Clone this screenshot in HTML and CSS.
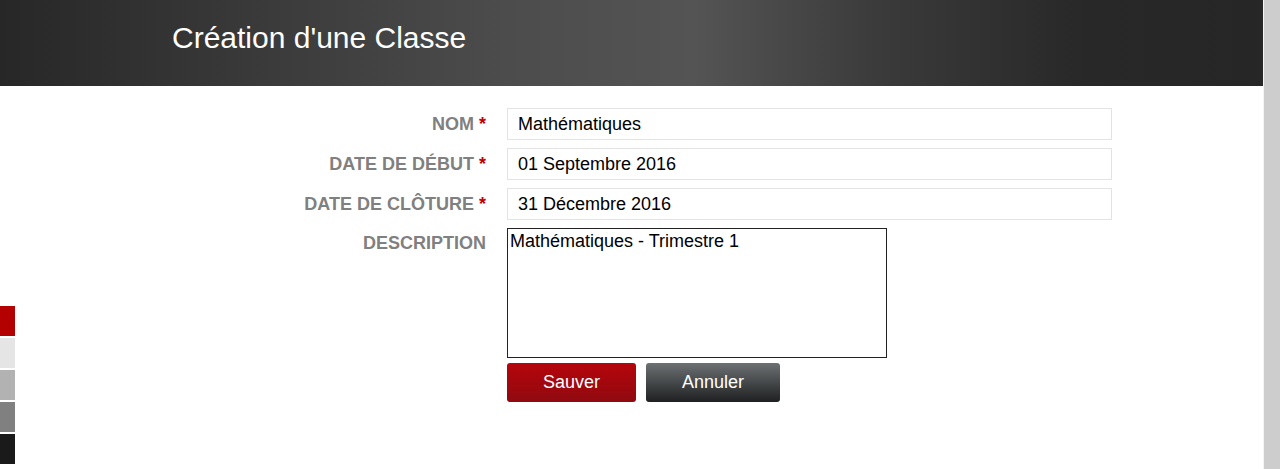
FILE: index.html
```html
<!DOCTYPE html>
<html lang="fr">
<head>
  <meta charset="utf-8">
  <title>Création d'une Classe</title>
  <link rel="stylesheet" href="styles.css">
</head>
<body>
  <div class="page">
    <div class="header">
      <h1>Création d'une Classe</h1>
    </div>

    <form class="class-form">
      <label class="field-label">NOM <span class="req">*</span></label>
      <input class="text-input" type="text" value="Mathématiques">

      <label class="field-label">DATE DE DÉBUT <span class="req">*</span></label>
      <input class="text-input" type="text" value="01 Septembre 2016">

      <label class="field-label">DATE DE CLÔTURE <span class="req">*</span></label>
      <input class="text-input" type="text" value="31 Décembre 2016">

      <label class="field-label desc-label">DESCRIPTION</label>
      <div class="desc-col">
        <textarea class="desc-input">Mathématiques - Trimestre 1</textarea>
        <div class="actions">
          <button type="button" class="btn btn-save">Sauver</button>
          <button type="button" class="btn btn-cancel">Annuler</button>
        </div>
      </div>
    </form>
  </div>

  <div class="scroll-strip"></div>

  <!-- colour switcher -->
  <div class="swatches">
    <div class="swatch red"></div>
    <div class="swatch light"></div>
    <div class="swatch mid"></div>
    <div class="swatch grey"></div>
    <div class="swatch dark"></div>
  </div>
</body>
</html>
```

FILE: styles.css
```css
body {
  margin: 0;
  font-family: "Liberation Sans", Arial, sans-serif;
  background: white;
  display: flex;
  height: 469px;
  overflow: hidden;
}

.page {
  flex: 1;
}

.header {
  height: 86px;
  background: linear-gradient(to right, #272727 0%, #4c4c4c 40%, #545454 55%, #3a3a3a 70%, #282828 86%, #262626 100%);
}

.header h1 {
  margin: 0;
  padding: 21px 0 0 172px;
  font-size: 30px;
  line-height: 34px;
  font-weight: normal;
  color: white;
}

.class-form {
  display: grid;
  grid-template-columns: 300px 605px;
  column-gap: 21px;
  row-gap: 8px;
  margin: 22px 0 0 186px;
}

.field-label {
  text-align: right;
  font-size: 18px;
  font-weight: bold;
  color: #808080;
  line-height: 32px;
}

.req {
  color: #c00000;
}

.text-input {
  height: 32px;
  box-sizing: border-box;
  border: 1px solid #e3e3e3;
  padding: 0 10px;
  font-family: "Liberation Sans", Arial, sans-serif;
  font-size: 18px;
  color: #000;
  outline: none;
}

.desc-label {
  line-height: 30px;
}

.desc-col {
  display: flex;
  flex-direction: column;
  align-items: flex-start;
}

.desc-input {
  width: 380px;
  height: 130px;
  box-sizing: border-box;
  border: 1px solid #222;
  padding: 2px;
  margin: 0;
  font-family: "Liberation Sans", Arial, sans-serif;
  font-size: 18px;
  color: #000;
  resize: none;
  outline: none;
}

.actions {
  display: flex;
  gap: 10px;
  margin-top: 5px;
}

.btn {
  height: 39px;
  border: none;
  border-radius: 3px;
  color: white;
  font-family: "Liberation Sans", Arial, sans-serif;
  font-size: 18px;
  cursor: pointer;
}

.btn-save {
  width: 129px;
  background: linear-gradient(#b5050b, #8f0a10);
}

.btn-cancel {
  width: 134px;
  background: linear-gradient(#6c7173, #1e2021);
}

.scroll-strip {
  width: 16px;
  border-left: 1px solid #f4f4f4;
  background: #cdcdcd;
}

.swatches {
  position: fixed;
  left: 0;
  top: 306px;
  display: flex;
  flex-direction: column;
  gap: 2px;
}

.swatch {
  width: 15px;
  height: 30px;
}

.swatch.red { background: #b30000; }
.swatch.light { background: #e5e5e5; }
.swatch.mid { background: #b2b2b2; }
.swatch.grey { background: #808080; }
.swatch.dark { background: #1a1a1a; }
```
